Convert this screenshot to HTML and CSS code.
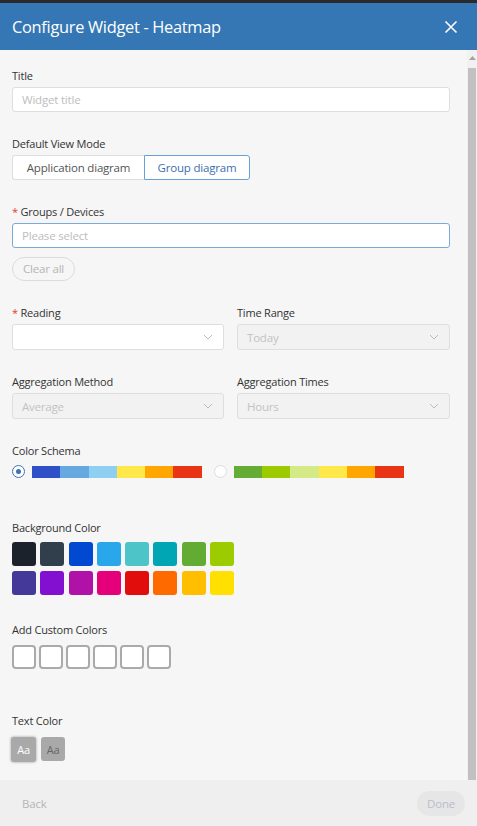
FILE: index.html
```html
<!DOCTYPE html>
<html>
<head>
<meta charset="utf-8">
<link rel="stylesheet" href="styles.css">
</head>
<body>
<div class="topbar"></div>
<header class="header">
  <h1 class="header-title">Configure Widget - Heatmap</h1>
  <svg class="close" width="14" height="14" viewBox="0 0 14 14"><path d="M1.5 1.5L12.5 12.5M12.5 1.5L1.5 12.5" stroke="#fff" stroke-width="1.6" fill="none"/></svg>
</header>
<div class="main">
  <div class="content">
    <div class="field">
      <label class="label">Title</label>
      <div class="input placeholder">Widget title</div>
    </div>
    <div class="field">
      <label class="label">Default View Mode</label>
      <div class="segmented">
        <div class="seg">Application diagram</div>
        <div class="seg active">Group diagram</div>
      </div>
    </div>
    <div class="field">
      <label class="label"><span class="req">*</span> Groups / Devices</label>
      <div class="input focus placeholder">Please select</div>
      <div class="clear-row"><span class="pill">Clear all</span></div>
    </div>
    <div class="row2">
      <div class="field">
        <label class="label"><span class="req">*</span> Reading</label>
        <div class="select"><span></span><svg class="chev" width="10" height="6" viewBox="0 0 10 6"><path d="M1 1L5 5L9 1" stroke="#bbb" stroke-width="1" fill="none"/></svg></div>
      </div>
      <div class="field">
        <label class="label">Time Range</label>
        <div class="select disabled"><span>Today</span><svg class="chev" width="10" height="6" viewBox="0 0 10 6"><path d="M1 1L5 5L9 1" stroke="#bbb" stroke-width="1" fill="none"/></svg></div>
      </div>
    </div>
    <div class="row2">
      <div class="field">
        <label class="label">Aggregation Method</label>
        <div class="select disabled"><span>Average</span><svg class="chev" width="10" height="6" viewBox="0 0 10 6"><path d="M1 1L5 5L9 1" stroke="#bbb" stroke-width="1" fill="none"/></svg></div>
      </div>
      <div class="field">
        <label class="label">Aggregation Times</label>
        <div class="select disabled"><span>Hours</span><svg class="chev" width="10" height="6" viewBox="0 0 10 6"><path d="M1 1L5 5L9 1" stroke="#bbb" stroke-width="1" fill="none"/></svg></div>
      </div>
    </div>
    <div class="field">
      <label class="label">Color Schema</label>
      <div class="schema-row">
        <span class="radio checked"></span>
        <div class="bar">
          <i style="background:#3050c8"></i><i style="background:#66a9e0"></i><i style="background:#8ecff2"></i><i style="background:#ffe84a"></i><i style="background:#ffa600"></i><i style="background:#e93516"></i>
        </div>
        <span class="radio"></span>
        <div class="bar">
          <i style="background:#64ac34"></i><i style="background:#9dca00"></i><i style="background:#d4ea86"></i><i style="background:#ffe84a"></i><i style="background:#ffa600"></i><i style="background:#e93516"></i>
        </div>
      </div>
    </div>
    <div class="field bg-field">
      <label class="label">Background Color</label>
      <div class="swatches">
        <i style="background:#1b222b"></i><i style="background:#313f4d"></i><i style="background:#0049d0"></i><i style="background:#28a8ea"></i><i style="background:#4cc4c8"></i><i style="background:#00a6b4"></i><i style="background:#63ac34"></i><i style="background:#9ccb00"></i>
        <i style="background:#443899"></i><i style="background:#8310d1"></i><i style="background:#b012a8"></i><i style="background:#e5007a"></i><i style="background:#e10c0c"></i><i style="background:#ff6a00"></i><i style="background:#ffbf00"></i><i style="background:#ffe000"></i>
      </div>
    </div>
    <div class="field custom-field">
      <label class="label">Add Custom Colors</label>
      <div class="customs">
        <i></i><i></i><i></i><i></i><i></i><i></i>
      </div>
    </div>
    <div class="field text-field">
      <label class="label">Text Color</label>
      <div class="aa-row">
        <span class="aa selected">Aa</span>
        <span class="aa dark">Aa</span>
      </div>
    </div>
  </div>
  <div class="scrollbar">
    <svg class="arrow" width="7" height="4" viewBox="0 0 7 4"><path d="M0 4L3.5 0L7 4Z" fill="#a3a3a3"/></svg>
    <div class="thumb"></div>
  </div>
</div>
<footer class="footer">
  <span class="back">Back</span>
  <span class="done">Done</span>
</footer>
</body>
</html>
```
FILE: styles.css
```css
* { box-sizing: border-box; }
html, body { margin: 0; padding: 0; }
body {
  width: 477px;
  height: 826px;
  overflow: hidden;
  font-family: "Open Sans", "Liberation Sans", sans-serif;
  font-size: 11px;
  letter-spacing: -0.2px;
  color: #333;
  background: #f6f6f6;
  display: flex;
  flex-direction: column;
}
.topbar { height: 3px; background: #2a2a2a; flex: none; }
.header {
  height: 47px;
  flex: none;
  background: #3577b4;
  display: flex;
  align-items: center;
  justify-content: space-between;
  padding: 0 19px 0 12px;
}
.header-title {
  margin: 0;
  font-size: 16.4px;
  font-weight: 400;
  color: #fff;
  letter-spacing: -0.3px;
}
.close { display: block; }
.main {
  height: 730px;
  flex: none;
  display: flex;
}
.content {
  flex: 1;
  padding: 18px 17px 0 12px;
  display: flex;
  flex-direction: column;
}
.field { display: flex; flex-direction: column; margin-bottom: 24px; }
.label { display: block; line-height: 16px; margin-bottom: 3px; color: #333; }
.req { color: #e53935; }
.input {
  height: 25px;
  background: #fff;
  border: 1px solid #dedede;
  border-radius: 3px;
  padding: 0 9px;
  line-height: 23px;
  font-size: 11.5px;
}
.placeholder { color: #bdbdbd; }
.input.focus { border-color: #7aa9dd; }
.segmented { display: flex; }
.seg {
  height: 25px;
  line-height: 23px;
  background: #fff;
  border: 1px solid #dedede;
  font-size: 11.5px;
  color: #555;
  text-align: center;
  white-space: nowrap;
}
.seg:first-child { border-radius: 3px 0 0 3px; border-right: none; width: 132px; }
.seg.active { border-color: #6a9fd8; color: #3b6fae; border-radius: 0 3px 3px 0; width: 106px; }
.clear-row { display: flex; margin-top: 9px; }
.pill {
  height: 24px;
  line-height: 22px;
  padding: 0 10px;
  border: 1px solid #dcdcdc;
  border-radius: 12px;
  color: #b5b5b5;
  font-size: 11.5px;
}
.row2 { display: grid; grid-template-columns: 212px 213px; column-gap: 13px; }
.select {
  height: 26px;
  background: #fff;
  border: 1px solid #dedede;
  border-radius: 3px;
  padding: 0 9px;
  display: flex;
  align-items: center;
  justify-content: space-between;
  font-size: 11.5px;
}
.select.disabled { background: #f2f2f2; color: #c2c2c2; }
.chev { display: block; margin-right: 1px; }
.schema-row { display: flex; align-items: center; margin-top: 3px; }
.radio {
  width: 13px; height: 13px;
  border-radius: 50%;
  border: 1px solid #ddd;
  background: #fff;
  flex: none;
  position: relative;
}
.radio.checked { border-color: #3b73b4; }
.radio.checked::after {
  content: "";
  position: absolute;
  left: 3px; top: 3px;
  width: 5px; height: 5px;
  border-radius: 50%;
  background: #3b73b4;
}
.bar { display: flex; height: 12px; margin: 0 12px 0 7px; }
.bar i { display: block; width: 28.3px; height: 12px; }
.bg-field { margin-top: 18px; }
.swatches { display: grid; grid-template-columns: repeat(8, 24px); column-gap: 4.3px; row-gap: 5px; margin-top: 3px; }
.swatches i { display: block; width: 24px; height: 24px; border-radius: 3px; }
.custom-field { margin-top: 3px; }
.customs { display: flex; gap: 3px; margin-top: 4px; }
.customs i { display: block; width: 24px; height: 24px; border: 2px solid #aaa; border-radius: 4px; background: #fff; }
.text-field { margin-top: 20px; }
.aa-row { display: flex; gap: 5px; margin-left: -1px; margin-top: 5px; }
.aa {
  width: 25px; height: 25px;
  border-radius: 3px;
  background: #a9a9a9;
  display: flex; align-items: center; justify-content: center;
  font-size: 11px;
}
.aa.selected { color: #fff; box-shadow: 0 0 2px 1px rgba(0,0,0,0.18); }
.aa.dark { color: #666; width: 24px; height: 24px; }
.scrollbar {
  width: 10px;
  flex: none;
  background: #f1f1f1;
  display: flex;
  flex-direction: column;
  align-items: center;
}
.arrow { margin-top: 6px; display: block; }
.thumb { width: 8px; flex: 1; background: #c1c1c1; margin-top: 8px; }
.footer {
  height: 46px;
  flex: none;
  background: #efefef;
  display: flex;
  align-items: center;
  justify-content: space-between;
  padding: 0 12px 0 22px;
}
.back { color: #b5b5b5; font-size: 11.5px; }
.done {
  height: 25px;
  line-height: 25px;
  padding: 0 10px;
  border-radius: 13px;
  background: #e6e6e6;
  color: #b8bccb;
  font-size: 11.5px;
}
```
